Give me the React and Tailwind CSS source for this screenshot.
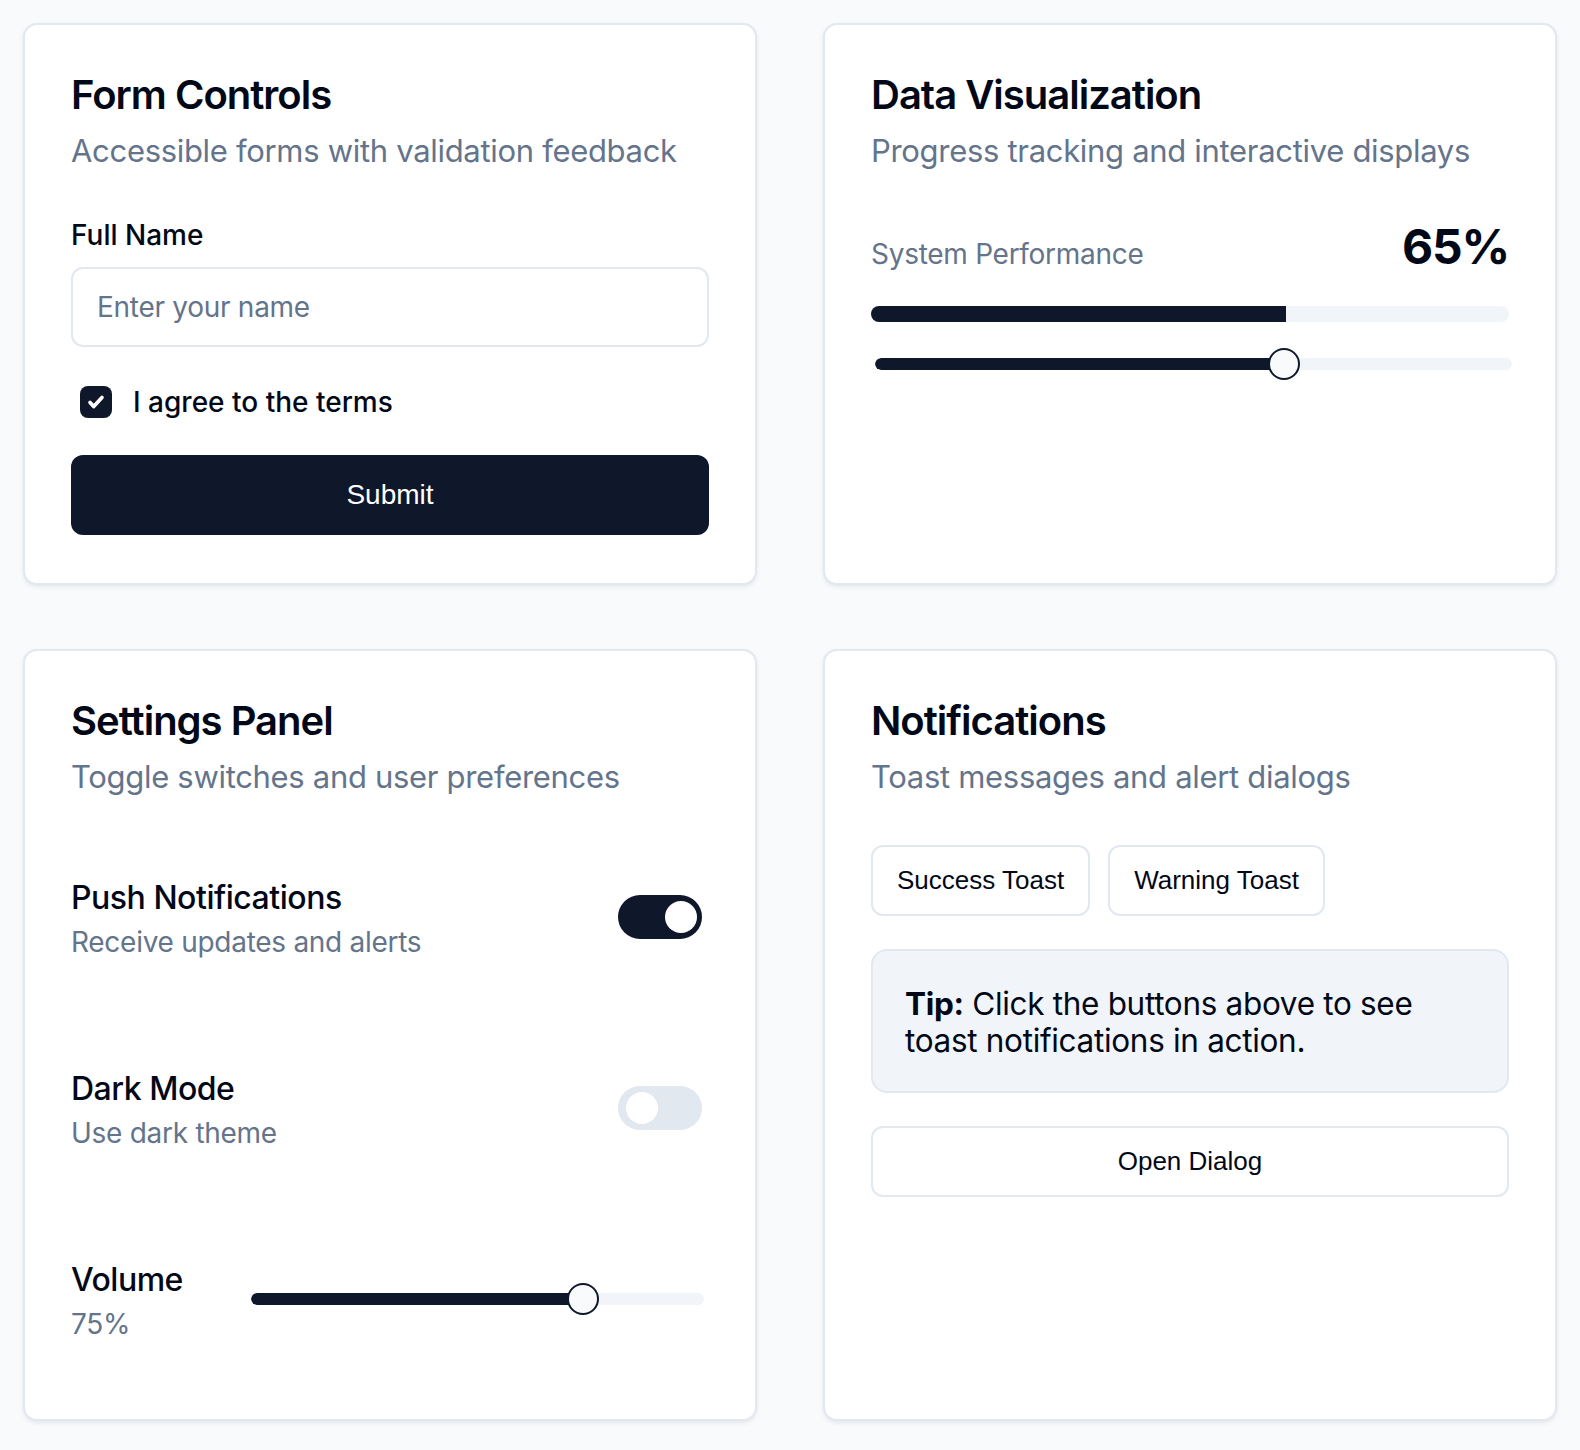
import React from "react";

const buttonFont = "font-['Liberation_Sans',Arial,sans-serif]";

const Card = ({ title, description, children }) => (
  <div className="flex flex-col rounded-[14px] border-2 border-[#e2e8f0] bg-white px-[46px] pt-[46px] pb-[48px] shadow-[0_2px_4px_rgba(15,23,42,0.08)]">
    <h2 className="text-[40px] leading-[48px] font-semibold tracking-tight text-[#020817]">{title}</h2>
    <p className="mt-3 text-[31px] leading-[40px] tracking-[-0.01em] text-[#64748b]">{description}</p>
    <div className="mt-12 flex flex-col">{children}</div>
  </div>
);

const Slider = ({ value }) => (
  <div className="relative flex h-8 items-center">
    <div className="h-3 w-full overflow-hidden rounded-full bg-[#f1f5f9]">
      <div className="h-full rounded-l-full bg-[#0f172a]" style={{ width: `calc(${value} * (100% - 32px) + 16px)` }} />
    </div>
    <div
      className="absolute top-0 h-8 w-8 rounded-full border-2 border-[#0f172a] bg-[#f8fafc]"
      style={{ left: `calc(${value} * (100% - 32px))` }}
    />
  </div>
);

const Toggle = ({ on }) =>
  on ? (
    <div className="mt-[19px] mr-[7px] flex h-[44px] w-[84px] shrink-0 items-center justify-end rounded-full bg-[#0f172a] pr-[5px]">
      <div className="h-8 w-8 rounded-full bg-white" />
    </div>
  ) : (
    <div className="mt-[19px] mr-[7px] flex h-[44px] w-[84px] shrink-0 items-center rounded-full bg-[#e2e8f0] pl-[8px]">
      <div className="h-8 w-8 rounded-full bg-white" />
    </div>
  );

const RowText = ({ label, hint, className = "" }) => (
  <div className={`flex flex-col pt-[2px] ${className}`}>
    <span className="text-[32px] leading-[40px] font-medium tracking-[-0.015em] text-[#020817]">{label}</span>
    <span className="mt-[4px] text-[28px] leading-[40px] tracking-[-0.01em] text-[#64748b]">{hint}</span>
  </div>
);

const SettingRow = ({ label, hint, on }) => (
  <div className="flex items-start justify-between pt-[31px] pb-[27px]">
    <RowText label={label} hint={hint} />
    <Toggle on={on} />
  </div>
);

const OutlineButton = ({ children, className = "" }) => (
  <button
    className={`h-[71px] rounded-[12px] border-2 border-[#e2e8f0] bg-white px-6 text-[26px] text-[#020817] ${buttonFont} ${className}`}
  >
    {children}
  </button>
);

export default function App() {
  return (
    <div className="min-h-screen bg-[#f8fafc] font-['Inter',sans-serif]">
      <div className="grid grid-cols-2 gap-x-[66px] gap-y-[64px] p-[23px]">
        <Card title="Form Controls" description="Accessible forms with validation feedback">
          <label className="text-[28px] leading-[32px] font-medium text-[#020817]">Full Name</label>
          <input
            type="text"
            placeholder="Enter your name"
            className="mt-4 h-[80px] w-full rounded-[12px] border-2 border-[#e2e8f0] bg-white px-6 text-[28px] tracking-[-0.01em] text-[#020817] outline-none placeholder:text-[#64748b]"
          />
          <div className="mt-[39px] flex h-8 items-center">
            <div className="ml-[9px] flex h-8 w-8 items-center justify-center rounded-[8px] bg-[#0f172a]">
              <svg width="22" height="22" viewBox="0 0 24 24" fill="none" stroke="white" strokeWidth="4" strokeLinecap="round" strokeLinejoin="round">
                <path d="M5.5 12.5l4 4.5L18.5 7" />
              </svg>
            </div>
            <span className="ml-[21px] text-[28px] leading-[32px] font-medium text-[#020817]">I agree to the terms</span>
          </div>
          <button className={`mt-[37px] h-[80px] w-full rounded-[12px] bg-[#0f172a] text-[28px] text-white ${buttonFont}`}>
            Submit
          </button>
        </Card>

        <Card title="Data Visualization" description="Progress tracking and interactive displays">
          <div className="flex items-baseline justify-between">
            <span className="text-[28px] tracking-[-0.01em] text-[#64748b]">System Performance</span>
            <span className="text-[48px] leading-[56px] font-bold tracking-tight text-[#020817]">65%</span>
          </div>
          <div className="mt-[31px] h-4 w-full overflow-hidden rounded-full bg-[#f1f5f9]">
            <div className="h-full w-[65%] bg-[#0f172a]" />
          </div>
          <div className="mt-[26px] ml-[4px] -mr-[3px]">
            <Slider value={0.65} />
          </div>
        </Card>

        <Card title="Settings Panel" description="Toggle switches and user preferences">
          <div className="flex flex-col gap-[47px]">
            <SettingRow label="Push Notifications" hint="Receive updates and alerts" on />
            <SettingRow label="Dark Mode" hint="Use dark theme" on={false} />
            <div className="flex items-start pt-[31px] pb-[27px]">
              <RowText label="Volume" hint="75%" className="w-[180px] shrink-0" />
              <div className="mt-[25px] mr-[5px] flex-1">
                <Slider value={0.75} />
              </div>
            </div>
          </div>
        </Card>

        <Card title="Notifications" description="Toast messages and alert dialogs">
          <div className="flex gap-[18px]">
            <OutlineButton>Success Toast</OutlineButton>
            <OutlineButton>Warning Toast</OutlineButton>
          </div>
          <div className="mt-[33px] rounded-[16px] border-2 border-[#e2e8f0] bg-[#f1f5f9] px-8 pt-[34px] pb-8 text-[31.5px] leading-[37px] tracking-[-0.01em] text-[#020817]">
            <span className="font-bold">Tip:</span> Click the buttons above to see toast notifications in action.
          </div>
          <OutlineButton className="mt-[33px] w-full">Open Dialog</OutlineButton>
        </Card>
      </div>
    </div>
  );
}
